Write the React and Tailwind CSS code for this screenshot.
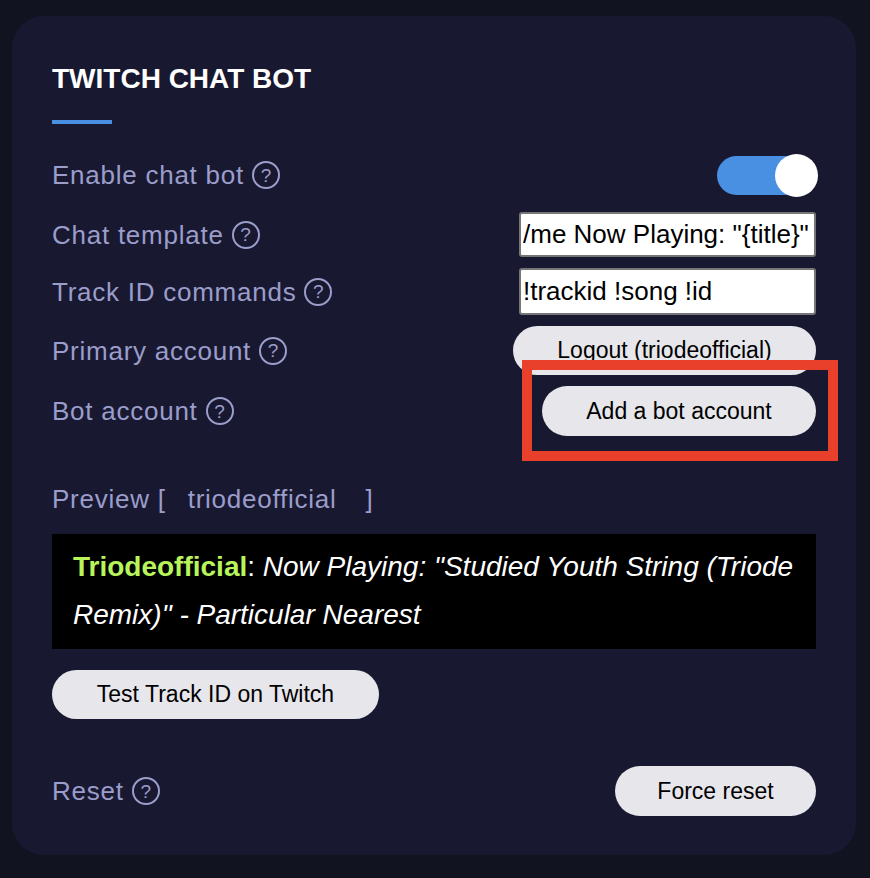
const Help = () => (
  <span className="ml-[8px] inline-flex h-[28px] w-[28px] shrink-0 items-center justify-center rounded-full border-2 border-[#9b9dca] text-[19px] leading-none tracking-normal text-[#9b9dca]">
    ?
  </span>
);

const Label = ({ children, help = true }) => (
  <div className="flex items-center text-[26px] leading-[30px] tracking-[0.75px] text-[#9b9dca]">
    <span>{children}</span>
    {help && <Help />}
  </div>
);

const Pill = ({ children, className = '' }) => (
  <button
    className={`flex items-center justify-center rounded-full bg-[#e6e6eb] text-[23px] text-black ${className}`}
  >
    {children}
  </button>
);

const Field = ({ value, className = '' }) => (
  <input
    type="text"
    defaultValue={value}
    className={`w-[297px] rounded-[3px] border-2 border-[#767676] bg-white pl-[2px] pr-[1px] text-[26px] text-black outline-none ${className}`}
  />
);

export default function App() {
  return (
    <div className="min-h-[878px] w-full bg-[#121320] pt-[16px] font-['Liberation_Sans',Arial,sans-serif]">
      <div className="ml-[12px] mr-[14px] flex flex-col rounded-[32px] bg-[#181931] px-[40px] pb-[39px] pt-[46px]">
        <h1 className="text-[28px] font-bold leading-[34px] text-white">TWITCH CHAT BOT</h1>
        <div className="mt-6 h-1 w-[60px] bg-[#4a90e2]" />

        <div className="mt-[30px] flex h-[42px] items-center justify-between">
          <Label>Enable chat bot</Label>
          <div className="relative mr-[5px] h-[39px] w-[94px] rounded-full bg-[#4a90e2]">
            <span className="absolute -right-[7px] -top-[2px] h-[43px] w-[43px] rounded-full bg-white" />
          </div>
        </div>

        <div className="mt-4 flex h-[45px] items-center justify-between">
          <Label>Chat template</Label>
          <Field value={'/me Now Playing: "{title}" - {artist}'} className="h-[45px]" />
        </div>

        <div className="mt-[11px] flex h-[47px] items-center justify-between">
          <Label>Track ID commands</Label>
          <Field value="!trackid !song !id" className="h-[47px]" />
        </div>

        <div className="mt-[11px] flex h-[49px] items-center justify-between">
          <Label>Primary account</Label>
          <Pill className="h-[49px] w-[303px]">Logout (triodeofficial)</Pill>
        </div>

        <div className="mt-[11px] flex h-[50px] items-center justify-between">
          <Label>Bot account</Label>
          <div className="relative">
            <Pill className="h-[50px] w-[274px]">Add a bot account</Pill>
            <div className="pointer-events-none absolute -bottom-[25px] -left-[20px] -right-[22px] -top-[26px] z-10 border-[10px] border-[#e8402a]" />
          </div>
        </div>

        <div className="mt-[48px] flex text-[26px] leading-[30px] tracking-[0.75px] text-[#9b9dca]">
          <span>Preview [</span>
          <span className="ml-[22px]">triodeofficial</span>
          <span className="ml-[29px]">]</span>
        </div>

        <div className="mt-[20px] bg-black pb-[10px] pl-[21px] pr-[10px] pt-[9px] text-[28px] leading-[48px] text-white">
          <span className="font-bold text-[#b8f55a]">Triodeofficial</span>
          <span>: </span>
          <span className="italic">Now Playing: "Studied Youth String (Triode Remix)" - Particular Nearest</span>
        </div>

        <div className="mt-[21px] flex">
          <Pill className="h-[49px] w-[327px]">Test Track ID on Twitch</Pill>
        </div>

        <div className="mt-[47px] flex h-[50px] items-center justify-between">
          <Label>Reset</Label>
          <Pill className="h-[50px] w-[201px]">Force reset</Pill>
        </div>
      </div>
    </div>
  );
}
